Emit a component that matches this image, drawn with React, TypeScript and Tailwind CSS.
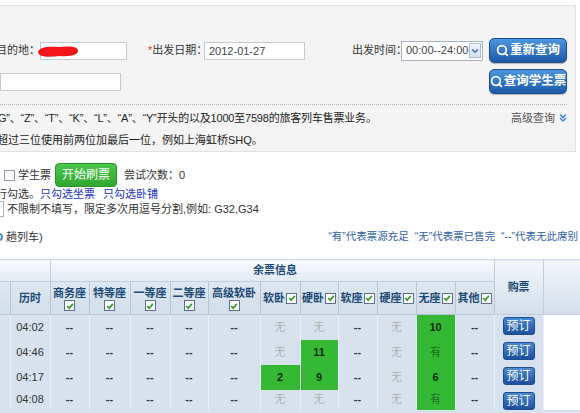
import { Search, ChevronsDown, ChevronDown } from "lucide-react";
import clsx from "clsx";

type Cell = { t: string; g?: boolean };

const D: Cell = { t: "--" };
const N: Cell = { t: "无" };
const G = (t: string): Cell => ({ t, g: true });

const rows: { time: string; seats: Cell[]; h: string }[] = [
  { time: "04:02", seats: [D, D, D, D, D, N, N, D, N, G("10"), D], h: "h-[25px]" },
  { time: "04:46", seats: [D, D, D, D, D, N, G("11"), D, N, G("有"), D], h: "h-[25px]" },
  { time: "04:17", seats: [D, D, D, D, D, G("2"), G("9"), D, N, G("6"), D], h: "h-[25px]" },
  { time: "04:08", seats: [D, D, D, D, D, N, N, D, N, G("有"), D], h: "h-[20px]" },
];

const colW = [
  "w-[10px]", "w-[40px]", "w-[39px]", "w-[41px]", "w-[40px]", "w-[38px]", "w-[52px]",
  "w-[40px]", "w-[38px]", "w-[39px]", "w-[39px]", "w-[39px]", "w-[39px]", "w-[49px]", "w-[37px]",
];

const stacked = ["商务座", "特等座", "一等座", "二等座", "高级软卧"];
const inline = ["软卧", "硬卧", "软座", "硬座", "无座", "其他"];

function Chk() {
  return (
    <span className="inline-flex h-[11px] w-[11px] shrink-0 items-center justify-center border border-[#5d7186] bg-white">
      <svg viewBox="0 0 10 10" className="h-[8px] w-[8px]">
        <path d="M1.5 5 L4 7.6 L8.6 2.4" fill="none" stroke="#3c9d2c" strokeWidth="2.2" />
      </svg>
    </span>
  );
}

function BlueButton({ children }: { children: React.ReactNode }) {
  return (
    <button className="flex h-[25px] w-[78px] items-center justify-center gap-[1px] whitespace-nowrap rounded-[5px] border border-[#1b4f8f] bg-linear-to-b from-[#4d96de] to-[#1a5aa8] px-0 text-[12.5px] font-bold text-white shadow-[0_1px_1px_rgba(0,0,0,0.25)]">
      <Search size={13} strokeWidth={3.2} className="shrink-0" />
      {children}
    </button>
  );
}

function SeatCell({ c }: { c: Cell }) {
  return (
    <td
      className={clsx(
        "border-r border-[#eaf0f6] text-center text-[11px]",
        c.g && "bg-[#35b935]",
        c.g && c.t === "有" && "text-[#1d6e1d]",
        c.g && c.t !== "有" && "font-bold text-[#0e2b0e]",
        !c.g && c.t === "无" && "text-[#b0b0b0]",
        !c.g && c.t === "--" && "font-bold text-[#333]"
      )}
    >
      {c.t}
    </td>
  );
}

export default function App() {
  return (
    <div className="h-[413px] w-[580px] overflow-hidden bg-white font-['Liberation_Sans','Noto_Sans_CJK_SC',sans-serif] text-[11px] text-[#333]">
      {/* search panel */}
      <div className="mt-[5px] w-[576px] border-y border-r border-[#e1e1e1] bg-[#f4f4f4] pt-[32px]">
        <div className="flex h-[25px] items-center whitespace-nowrap">
          <span className="-ml-[4px] w-[44px] shrink-0">目的地：</span>
          <div className="relative h-[18px] w-[87px] shrink-0 border border-[#c4cad1] bg-white">
            <svg width="44" height="15" className="absolute -left-[5px] top-[1px]">
              <path
                d="M2 8 C3 3 12 2 22 3 C32 2 41 2 42 6 C43 10 36 13 24 12 C14 13 3 14 2 8Z"
                fill="#f2161a"
              />
            </svg>
          </div>
          <span className="ml-[21px] w-[56px] shrink-0">
            <span className="text-[#e0312c]">*</span>出发日期：
          </span>
          <div className="h-[18px] w-[101px] shrink-0 border border-[#c4cad1] bg-white pl-[4px] leading-[16px] text-[#444]">
            2012-01-27
          </div>
          <span className="ml-[47px] w-[49px] shrink-0">出发时间：</span>
          <div className="flex h-[20px] w-[82px] shrink-0 items-center justify-between border border-[#a9b3be] bg-white pl-[4px] pr-[1px] text-[#444]">
            <span>00:00--24:00</span>
            <span className="flex h-[15px] w-[12px] items-center justify-center border border-[#a7bbd2] bg-linear-to-b from-[#eef4fb] to-[#d3e1f1]">
              <ChevronDown size={10} strokeWidth={3.5} className="text-[#3f6fae]" />
            </span>
          </div>
          <div className="ml-[6px]">
            <BlueButton>重新查询</BlueButton>
          </div>
        </div>

        <div className="mt-[6px] flex h-[25px] w-[567px] items-center justify-between">
          <div className="h-[18px] w-[121px] border border-[#c4cad1] bg-white" />
          <BlueButton>查询学生票</BlueButton>
        </div>

        <div className="mt-[10px] w-[567px] border-t border-dotted border-[#b4b4b4]" />

        <div className="mt-[2px] w-[569px] whitespace-nowrap leading-[22px] text-[#222]">
          <div className="flex justify-between">
            <span className="-ml-[2px] tracking-[-0.2px]">G”、“Z”、“T”、“K”、“L”、“A”、“Y”开头的以及1000至7598的旅客列车售票业务。</span>
            <span className="flex items-center gap-[2px] text-[#555]">
              高级查询
              <ChevronsDown size={12} strokeWidth={3} className="text-[#3f82d4]" />
            </span>
          </div>
          <div className="-ml-[3px]">超过三位使用前两位加最后一位，例如上海虹桥SHQ。</div>
        </div>
      </div>

      {/* refresh controls */}
      <div className="mt-[11px] flex h-[24px] items-center whitespace-nowrap">
        <span className="ml-[4px] h-[11px] w-[11px] border border-[#8d98a4] bg-white" />
        <span className="ml-[3px] w-[37px]">学生票</span>
        <button className="flex h-[24px] w-[62px] items-center justify-center rounded-[4px] border border-[#2b932b] bg-linear-to-b from-[#4ac64a] to-[#2fa82f] text-[12px] text-white">
          开始刷票
        </button>
        <span className="ml-[7px]">尝试次数：0</span>
      </div>
      <div className="-ml-[4px] h-[14px] whitespace-nowrap leading-[14px]">
        行勾选。<span className="text-[#2233cc]">只勾选坐票</span>
        <span className="ml-[8px] text-[#2233cc]">只勾选卧铺</span>
      </div>
      <div className="flex h-[16px] items-center whitespace-nowrap">
        <span className="h-[16px] w-[4px] border border-l-0 border-[#a9b1ba] bg-white" />
        <span className="ml-[3px]">不限制不填写，限定多次用逗号分割,例如: G32,G34</span>
      </div>
      <div className="mt-[11px] flex h-[18px] w-[578px] items-center justify-between whitespace-nowrap">
        <span className="flex items-center">
          <span className="-ml-[5px] h-[8px] w-[8px] rounded-full border-2 border-[#5a8fd2]" />
          <span className="ml-[3px]">趟列车)</span>
        </span>
        <span className="text-[10.5px] text-[#2f5fa8]">“有”代表票源充足&nbsp;&nbsp;“无”代表票已售完&nbsp;&nbsp;“--”代表无此席别</span>
      </div>

      {/* result table */}
      <table className="mt-[13px] w-[580px] table-fixed border-collapse">
        <colgroup>
          {colW.map((w, i) => (
            <col key={i} className={w} />
          ))}
        </colgroup>
        <thead className="font-bold text-[#1b4a76]">
          <tr className="h-[22px] border-t border-[#d3dbe4]">
            <th colSpan={2} className="border-r border-b border-[#bfcddc] bg-linear-to-b from-[#f9fbfd] to-[#e0e9f2]" />
            <th colSpan={11} className="border-r border-b border-[#bfcddc] bg-linear-to-b from-[#f9fbfd] to-[#e0e9f2] text-center">
              <span className="ml-[6px]">余票信息</span>
            </th>
            <th rowSpan={2} className="border-r border-b border-[#bfcddc] bg-linear-to-b from-[#f4f7fb] to-[#d2deeb] text-center">
              购票
            </th>
            <th rowSpan={2} className="border-b border-[#bfcddc] bg-linear-to-b from-[#f4f7fb] to-[#d2deeb]" />
          </tr>
          <tr className="h-[33px] bg-linear-to-b from-[#dde7f1] to-[#d1ddea]">
            <th className="border-r border-b border-[#b7c6d6]" />
            <th className="border-r border-b border-[#b7c6d6] text-center">历时</th>
            {stacked.map((s) => (
              <th key={s} className="border-r border-b border-[#b7c6d6] p-0">
                <div className="flex flex-col items-center pt-[2px] leading-[13px] whitespace-nowrap">
                  {s}
                  <Chk />
                </div>
              </th>
            ))}
            {inline.map((s) => (
              <th key={s} className="border-r border-b border-[#b7c6d6] p-0">
                <div className="flex items-center justify-center gap-[1px] whitespace-nowrap">
                  {s}
                  <Chk />
                </div>
              </th>
            ))}
          </tr>
        </thead>
        <tbody>
          {rows.map((r) => (
            <tr key={r.time} className={clsx(r.h, "bg-[#d7e2ee]")}>
              <td className="border-r border-[#eaf0f6]" />
              <td className="border-r border-[#eaf0f6] text-center text-[#333]">{r.time}</td>
              {r.seats.map((c, i) => (
                <SeatCell key={i} c={c} />
              ))}
              <td className="border-r border-[#eaf0f6] align-top pt-[2px]">
                <button className="mx-auto flex h-[18px] w-[32px] items-center justify-center rounded-[3px] border border-[#1d4e8f] bg-linear-to-b from-[#4b8ad6] to-[#1c4f9c] text-[12px] text-white">
                  预订
                </button>
              </td>
              <td className="bg-white" />
            </tr>
          ))}
        </tbody>
      </table>
      <div className="h-[8px] w-[580px] bg-[#d7e2ee]" />
    </div>
  );
}
